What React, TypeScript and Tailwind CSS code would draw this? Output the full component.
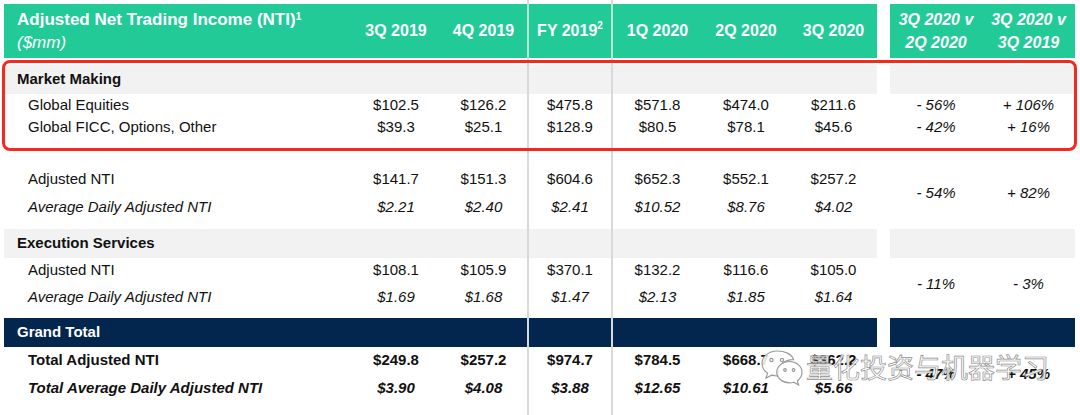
import React from 'react';

// one grid for the whole table, fixed column widths taken from the slide
const FY_LINE = 'border-x-2 border-[#d9d9d9]';
const HEAD_LINE = 'border-x-2 border-[#b9e6d3]';

type DataProps = {
  label: string;
  values: string[];
  pcts?: string[];
  span?: boolean;
  italic?: boolean;
  bold?: boolean;
};

function Spacer() {
  return (
    <>
      <div />
      <div />
      <div />
      <div className={FY_LINE} />
      <div />
      <div />
      <div />
      <div />
      <div />
      <div />
    </>
  );
}

function Band({ label, navy }: { label: string; navy?: boolean }) {
  const bg = navy ? 'bg-[#03264f] text-white' : 'bg-[#f2f2f2] text-[#111]';
  return (
    <>
      <div className={`${bg} flex items-center pl-[13px] text-[15px] font-bold`}>{label}</div>
      {[0, 1, 2, 3, 4, 5].map((i) => (
        <div key={i} className={`${bg} ${i === 2 ? FY_LINE : ''}`} />
      ))}
      <div />
      <div className={bg} />
      <div className={bg} />
    </>
  );
}

function DataRow({ label, values, pcts, span, italic, bold }: DataProps) {
  const txt = `${italic ? 'italic' : ''} ${bold ? 'font-bold' : ''}`;
  return (
    <>
      <div className={`flex items-center pl-[24px] text-[15px] text-[#111] ${txt}`}>{label}</div>
      {values.map((v, i) => (
        <div
          key={i}
          className={`flex items-center justify-center text-[15px] text-[#111] ${txt} ${i === 2 ? FY_LINE : ''}`}
        >
          {v}
        </div>
      ))}
      {pcts && (
        <>
          <div className={span ? 'row-span-2' : ''} />
          {pcts.map((p, i) => (
            <div
              key={i}
              className={`${span ? 'row-span-2' : ''} flex items-center justify-center text-[15px] italic text-[#111] ${bold ? 'font-bold' : ''}`}
            >
              {p}
            </div>
          ))}
        </>
      )}
    </>
  );
}

function Header() {
  const green = 'bg-[#22ca98] text-white';
  const cols = ['3Q 2019', '4Q 2019', 'FY 2019', '1Q 2020', '2Q 2020', '3Q 2020'];
  return (
    <>
      <div className={`${green} flex flex-col justify-center pl-[13px] leading-[23px] text-[17px]`}>
        <div className="font-bold">
          Adjusted Net Trading Income (NTI)<sup className="text-[10px]">1</sup>
        </div>
        <div className="italic">($mm)</div>
      </div>
      {cols.map((c, i) => (
        <div
          key={c}
          className={`${green} flex items-center justify-center text-[16px] font-bold ${i === 2 ? HEAD_LINE : ''}`}
        >
          {c}
          {i === 2 && <sup className="text-[10px]">2</sup>}
        </div>
      ))}
      <div />
      <div className={`${green} flex flex-col items-center justify-center text-[16px] font-bold italic leading-[23px]`}>
        <span>3Q 2020 v</span>
        <span>2Q 2020</span>
      </div>
      <div className={`${green} flex flex-col items-center justify-center text-[16px] font-bold italic leading-[23px]`}>
        <span>3Q 2020 v</span>
        <span>3Q 2019</span>
      </div>
    </>
  );
}

function WeChatMark() {
  return (
    <svg width="44" height="38" viewBox="0 0 44 38" fill="rgba(255,255,255,0.85)" stroke="#9a9a9a" strokeWidth="1.2">
      <path d="M17 3C8.7 3 2 8.6 2 15.5c0 3.9 2.1 7.3 5.5 9.6L6 30l5.6-2.8c1.7.5 3.5.8 5.4.8.6 0 1.2 0 1.7-.1-.4-1.2-.6-2.4-.6-3.7 0-7 6.5-12.6 14.6-12.6h.9C32 6.4 25.3 3 17 3z" />
      <path d="M42 24.2c0-5.9-5.8-10.7-12.6-10.7S16.8 18.3 16.8 24.2s5.8 10.7 12.6 10.7c1.5 0 3-.2 4.4-.7L38.6 37l-1.2-4.3c2.8-2 4.6-5 4.6-8.5z" />
      <circle cx="11.5" cy="12" r="1.6" />
      <circle cx="22" cy="12" r="1.6" />
      <circle cx="25" cy="22" r="1.3" />
      <circle cx="33.5" cy="22" r="1.3" />
    </svg>
  );
}

export default function App() {
  return (
    <div className="relative h-[415px] w-[1080px] overflow-hidden bg-white font-['Liberation_Sans',Arial,sans-serif]">
      <div className="grid grid-cols-[348px_88px_87px_86px_89px_88px_87px_13px_92px_93px] grid-rows-[4px_54px_7px_29px_22px_23px_26px_28px_29px_7px_29px_25px_28px_7px_29px_27px_28px_13px] pl-[4px]">
        <Spacer />
        <Header />
        <Spacer />

        <Band label="Market Making" />
        <DataRow
          label="Global Equities"
          values={['$102.5', '$126.2', '$475.8', '$571.8', '$474.0', '$211.6']}
          pcts={['- 56%', '+ 106%']}
        />
        <DataRow
          label="Global FICC, Options, Other"
          values={['$39.3', '$25.1', '$128.9', '$80.5', '$78.1', '$45.6']}
          pcts={['- 42%', '+ 16%']}
        />
        <Spacer />
        <DataRow
          label="Adjusted NTI"
          values={['$141.7', '$151.3', '$604.6', '$652.3', '$552.1', '$257.2']}
          pcts={['- 54%', '+ 82%']}
          span
        />
        <DataRow
          label="Average Daily Adjusted NTI"
          values={['$2.21', '$2.40', '$2.41', '$10.52', '$8.76', '$4.02']}
          italic
        />
        <Spacer />

        <Band label="Execution Services" />
        <DataRow
          label="Adjusted NTI"
          values={['$108.1', '$105.9', '$370.1', '$132.2', '$116.6', '$105.0']}
          pcts={['- 11%', '- 3%']}
          span
        />
        <DataRow
          label="Average Daily Adjusted NTI"
          values={['$1.69', '$1.68', '$1.47', '$2.13', '$1.85', '$1.64']}
          italic
        />
        <Spacer />

        <Band label="Grand Total" navy />
        <DataRow
          label="Total Adjusted NTI"
          values={['$249.8', '$257.2', '$974.7', '$784.5', '$668.7', '$362.2']}
          pcts={['- 47%', '+ 45%']}
          span
          bold
        />
        <DataRow
          label="Total Average Daily Adjusted NTI"
          values={['$3.90', '$4.08', '$3.88', '$12.65', '$10.61', '$5.66']}
          italic
          bold
        />
        <Spacer />
      </div>

      {/* highlight box drawn over the market making block */}
      <div className="pointer-events-none absolute left-[2px] top-[60px] h-[91px] w-[1075px] rounded-[8px] border-[3px] border-[#f42a20]" />

      {/* watermark */}
      <div className="pointer-events-none absolute left-[760px] top-[347px] flex items-center gap-[2px]">
        <WeChatMark />
        <span className="font-['Noto_Sans_CJK_SC',sans-serif] text-[27px] leading-[40px] text-white/90 [-webkit-text-stroke:0.7px_#8f8f8f]">
          量化投资与机器学习
        </span>
      </div>
    </div>
  );
}
